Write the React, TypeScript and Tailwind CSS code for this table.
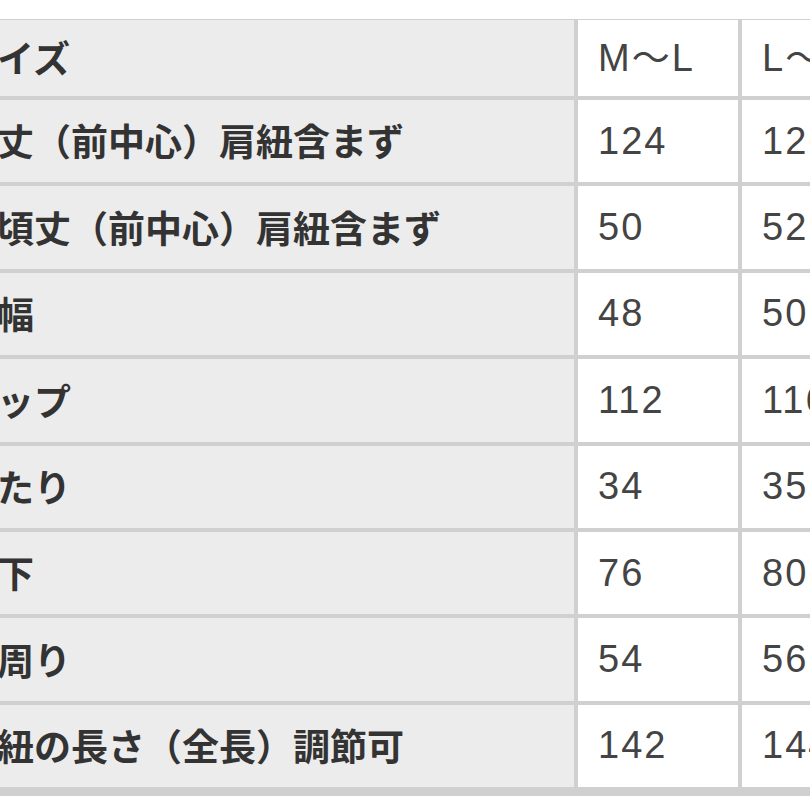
import React from "react";

const rows: [string, string, string][] = [
  ["着丈（前中心）肩紐含まず", "124", "126"],
  ["身頃丈（前中心）肩紐含まず", "50", "52"],
  ["身幅", "48", "50"],
  ["ヒップ", "112", "116"],
  ["わたり", "34", "35"],
  ["股下", "76", "80"],
  ["裾周り", "54", "56"],
  ["肩紐の長さ（全長）調節可", "142", "144"],
];

const labelCls =
  "bg-[#ececec] pl-[20px] flex items-center text-[37px] font-bold text-[#333333] whitespace-nowrap overflow-hidden [font-family:'Noto_Sans_CJK_JP',sans-serif]";
const valueCls =
  "bg-white pl-[20px] flex items-center text-[38px] tracking-[2px] text-[#444444] whitespace-nowrap overflow-hidden [font-family:'Liberation_Sans','Noto_Sans_CJK_JP',sans-serif]";

export default function App() {
  return (
    <div className="w-[810px] h-[810px] overflow-hidden bg-white pt-[19px]">
      <div className="-ml-[60px] w-[1000px] bg-[#d0d0d0] pb-[9px] pt-[1px] grid grid-cols-[634px_160px_200px] gap-x-[4px] gap-y-[4px] grid-rows-[76px_repeat(8,82.4px)]">
        <div className={labelCls}>サイズ</div>
        <div className={valueCls}>M～L</div>
        <div className={valueCls}>L～LL</div>
        {rows.map(([l, a, b]) => (
          <React.Fragment key={l}>
            <div className={labelCls}>{l}</div>
            <div className={valueCls}>{a}</div>
            <div className={valueCls}>{b}</div>
          </React.Fragment>
        ))}
      </div>
    </div>
  );
}
